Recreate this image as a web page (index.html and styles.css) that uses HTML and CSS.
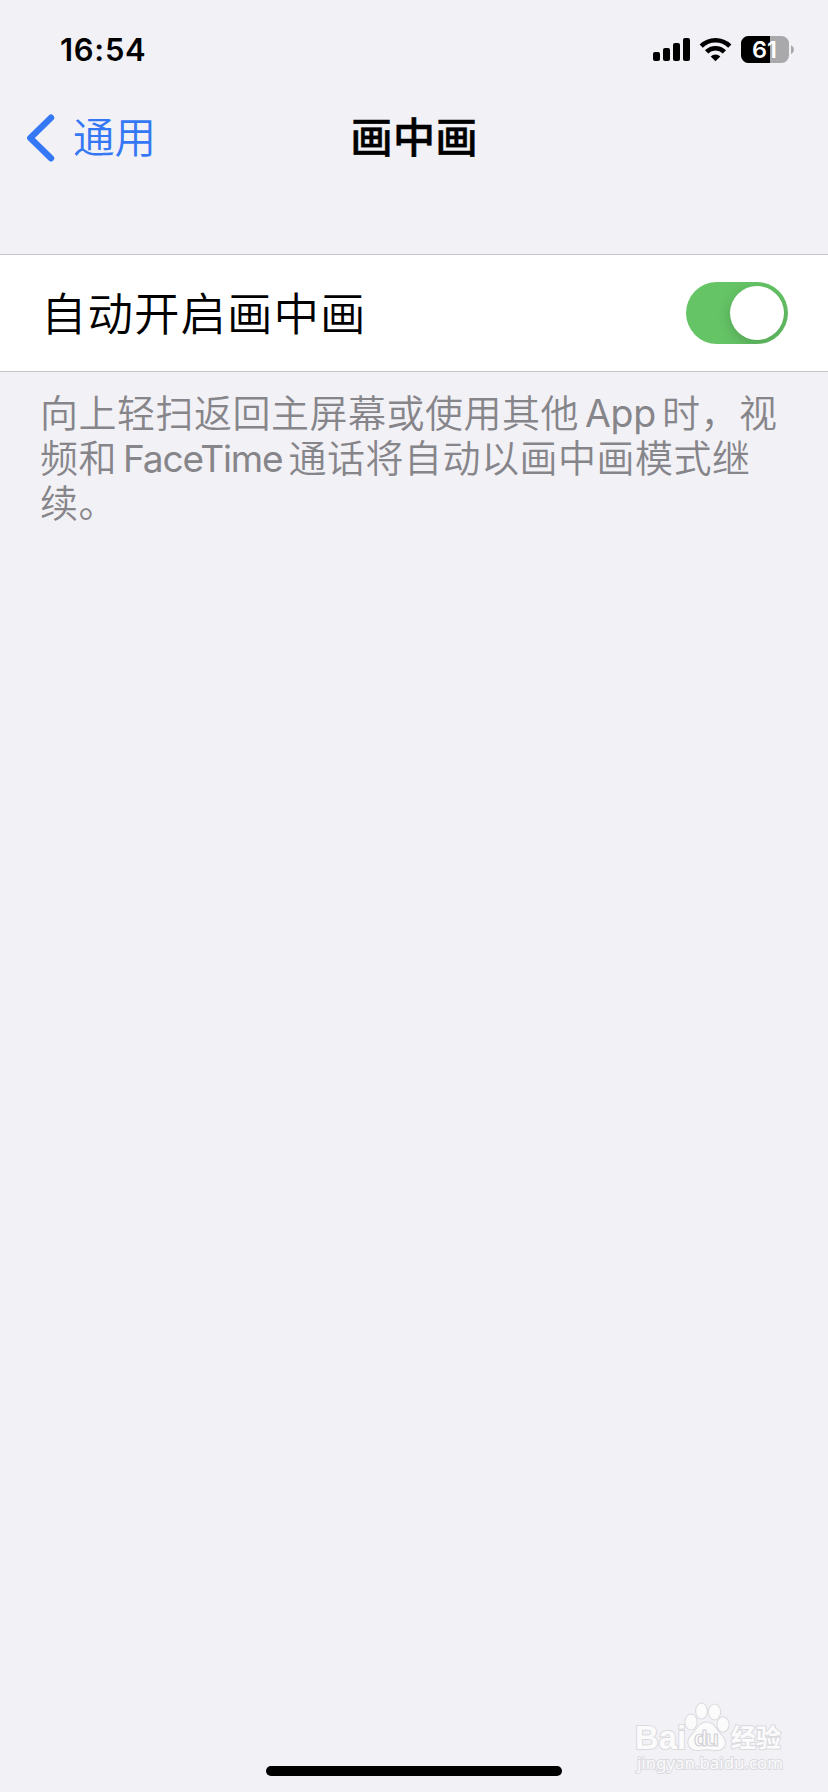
FILE: index.html
```html
<!DOCTYPE html>
<html lang="zh-CN">
<head>
<meta charset="utf-8">
<title>画中画</title>
<link rel="stylesheet" href="styles.css">
</head>
<body>
<div class="screen">
  <header class="status">
    <span class="time">16:54</span>
    <svg class="indicators" width="144" height="32" viewBox="652 34 144 32">
      <rect x="653" y="52" width="7" height="9" rx="2"/>
      <rect x="663" y="48" width="7" height="13" rx="2"/>
      <rect x="673" y="43" width="7" height="18" rx="2"/>
      <rect x="683" y="38" width="7" height="23" rx="2"/>
      <g fill="none" stroke="#000">
        <path d="M701.2 46.2A20.3 20.3 0 0 1 729.8 46.2" stroke-width="4.6"/>
        <path d="M706.6 51.9A12.6 12.6 0 0 1 724.4 51.9" stroke-width="4.6"/>
      </g>
      <path d="M715.5 61.2L710.7 56.6A6.8 6.8 0 0 1 720.3 56.6Z"/>
      <rect x="741" y="36" width="48" height="27" rx="7.5" fill="#a9a9ab"/>
      <path d="M770 36H748.5A7.5 7.5 0 0 0 741 43.5V55.5A7.5 7.5 0 0 0 748.5 63H770Z"/>
      <path d="M791 45.3C794.8 46.5 794.8 52.8 791 54Z" fill="#a9a9ab"/>
      <text class="charge" x="764.5" y="58" text-anchor="middle">61</text>
    </svg>
  </header>
  <nav class="nav">
    <a class="back">
      <svg width="30" height="50" viewBox="0 0 30 50"><path d="M26 4.7L5.3 25L26 45.3" fill="none" stroke="#3478f6" stroke-width="6.4" stroke-linecap="round" stroke-linejoin="round"/></svg>
      <span class="parent">通用</span>
    </a>
    <h1 class="title">画中画</h1>
  </nav>
  <main class="content">
    <section class="row">
      <span class="label">自动开启画中画</span>
      <span class="toggle"><span class="knob"></span></span>
    </section>
    <p class="note">向上轻扫返回主屏幕或使用其他<span class="latin app">App</span>时，视<br>频和<span class="latin face">FaceTime</span>通话将自动以画中画模式继<br>续。</p>
  </main>
  <footer class="footer">
    <svg class="brand" width="160" height="80" viewBox="630 1700 160 80">
      <g fill="#fbfbfc" stroke="#dadade" stroke-width="2" paint-order="stroke">
        <text class="bai" x="635" y="1749" textLength="51" lengthAdjust="spacingAndGlyphs">Bai</text>
        <ellipse cx="691" cy="1722" rx="5.6" ry="7.4"/>
        <ellipse cx="701.5" cy="1711" rx="5.4" ry="7.6"/>
        <ellipse cx="714.5" cy="1712" rx="5.6" ry="7.4"/>
        <ellipse cx="723" cy="1724.5" rx="5.6" ry="7.2"/>
        <path d="M706.5 1722.5C713 1722.5 716 1729 721 1735C729 1743 724 1751 715 1750C709 1749 705 1749 699 1750C690 1751 685 1743 691 1736C697 1730 699 1722.5 706.5 1722.5Z"/>
        <text class="jing" x="731" y="1747" textLength="50">经验</text>
        <text class="url" x="637" y="1769" textLength="146" lengthAdjust="spacingAndGlyphs">jingyan.baidu.com</text>
      </g>
      <text class="du" x="694" y="1746" textLength="25">du</text>
    </svg>
    <div class="home"></div>
  </footer>
</div>
</body>
</html>
```
FILE: styles.css
```css
* { box-sizing: border-box; }
body { margin: 0; background: #f2f1f6; font-family: "Inter", "Noto Sans CJK SC", sans-serif; color: #000; }
.screen { width: 828px; height: 1792px; display: flex; flex-direction: column; overflow: hidden; }
.status { height: 100px; display: flex; justify-content: space-between; align-items: center; padding: 0 32px 0 60px; }
.time { font-size: 31px; font-weight: 600; letter-spacing: 0.7px; padding-bottom: 1px; }
.indicators { display: block; }
.charge { font-size: 23.5px; font-weight: 600; fill: #fff; }
.nav { height: 154px; display: grid; grid-template-columns: 1fr auto 1fr; align-items: start; padding: 0 25px; }
.back { display: flex; align-items: center; gap: 18px; height: 75px; color: #3478f6; font-size: 41.5px; }
.parent { font-family: "Noto Sans CJK SC DemiLight", "Noto Sans CJK SC", sans-serif; font-weight: 350; padding-bottom: 5px; }
.title { margin: 0; height: 75px; line-height: 75px; font-size: 42.5px; font-weight: 500; -webkit-text-stroke: 0.4px #000; }
.content { flex: 1; }
.row { height: 118px; background: #fff; border-top: 1px solid #c6c6c8; border-bottom: 1px solid #c6c6c8; display: flex; align-items: center; justify-content: space-between; padding: 0 40px; }
.label { font-family: "Noto Sans CJK SC DemiLight", "Noto Sans CJK SC", sans-serif; font-size: 45.5px; letter-spacing: 1px; font-weight: 350; padding: 0 0 4px 1px; }
.toggle { width: 102px; height: 62px; border-radius: 31px; background: #65c466; padding: 4px; display: flex; justify-content: flex-end; overflow: hidden; }
.knob { width: 54px; height: 54px; border-radius: 50%; background: #fff; box-shadow: 0 4px 14px rgba(0,0,0,.18); }
.note { margin: 0; padding: 19px 0 0 40px; color: #86858a; font-family: "Inter", "Noto Sans CJK SC DemiLight", "Noto Sans CJK SC", sans-serif; font-size: 38px; letter-spacing: 0.5px; line-height: 44px; white-space: nowrap; font-weight: 350; }
.latin { font-size: 37.5px; font-weight: 400; letter-spacing: -0.3px; }
.app { margin: 0 6px; }
.face { margin: 0 6px; font-size: 37px; letter-spacing: -1.1px; }
.footer { display: flex; flex-direction: column; align-items: center; height: 92px; justify-content: flex-end; padding-bottom: 16px; position: relative; }
.brand { position: absolute; left: 630px; top: 0; }
.bai { font: 700 33px "Liberation Sans", sans-serif; }
.du { font: 700 22px "Liberation Sans", sans-serif; fill: #fbfbfc; stroke: #d3d3d7; stroke-width: 1.2; }
.jing { font: 700 25px "Noto Sans CJK SC", sans-serif; }
.url { font: 400 17px "Noto Sans", sans-serif; }
.home { width: 296px; height: 10px; border-radius: 5px; background: #000; }
```
